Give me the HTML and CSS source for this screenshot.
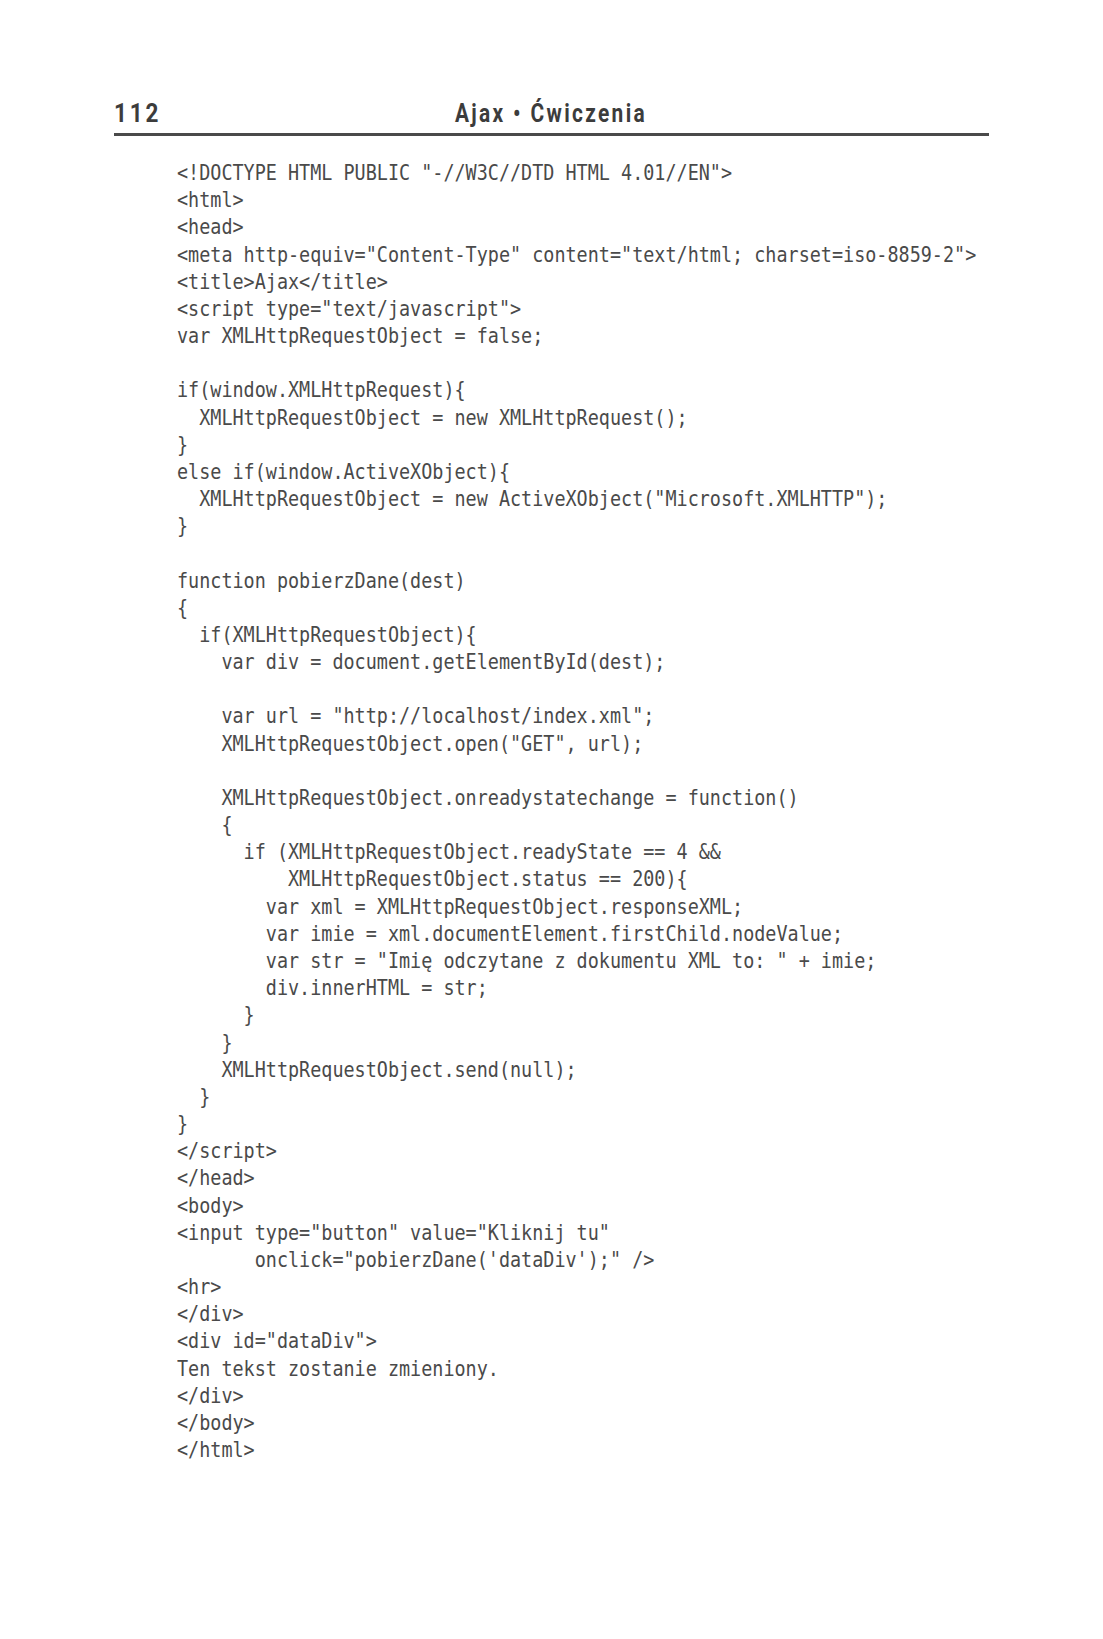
FILE: index.html
```html
<!DOCTYPE html>
<html lang="pl">
<head>
<meta charset="utf-8">
<title>Ajax • Ćwiczenia</title>
<link rel="stylesheet" href="styles.css">
</head>
<body>
<div class="page">
  <header class="running-head">
    <span class="folio">112</span>
    <span class="title">Ajax • Ćwiczenia</span>
    <span class="spacer"></span>
  </header>
  <div class="listing">
<pre class="code">&lt;!DOCTYPE HTML PUBLIC "-//W3C//DTD HTML 4.01//EN"&gt;
&lt;html&gt;
&lt;head&gt;
&lt;meta http-equiv="Content-Type" content="text/html; charset=iso-8859-2"&gt;
&lt;title&gt;Ajax&lt;/title&gt;
&lt;script type="text/javascript"&gt;
var XMLHttpRequestObject = false;

if(window.XMLHttpRequest){
  XMLHttpRequestObject = new XMLHttpRequest();
}
else if(window.ActiveXObject){
  XMLHttpRequestObject = new ActiveXObject("Microsoft.XMLHTTP");
}

function pobierzDane(dest)
{
  if(XMLHttpRequestObject){
    var div = document.getElementById(dest);

    var url = "http://localhost/index.xml";
    XMLHttpRequestObject.open("GET", url);

    XMLHttpRequestObject.onreadystatechange = function()
    {
      if (XMLHttpRequestObject.readyState == 4 &amp;&amp;
          XMLHttpRequestObject.status == 200){
        var xml = XMLHttpRequestObject.responseXML;
        var imie = xml.documentElement.firstChild.nodeValue;
        var str = "Imię odczytane z dokumentu XML to: " + imie;
        div.innerHTML = str;
      }
    }
    XMLHttpRequestObject.send(null);
  }
}
&lt;/script&gt;
&lt;/head&gt;
&lt;body&gt;
&lt;input type="button" value="Kliknij tu"
       onclick="pobierzDane('dataDiv');" /&gt;
&lt;hr&gt;
&lt;/div&gt;
&lt;div id="dataDiv"&gt;
Ten tekst zostanie zmieniony.
&lt;/div&gt;
&lt;/body&gt;
&lt;/html&gt;</pre>
  </div>
</div>
</body>
</html>
```

FILE: styles.css
```css
html, body {
  margin: 0;
  padding: 0;
  background: #ffffff;
}

.page {
  width: 875px;
  margin-left: 114px;
  padding-top: 99px;
}

.running-head {
  display: grid;
  grid-template-columns: 1fr auto 1fr;
  align-items: baseline;
  padding: 0 0 4px 0;
  border-bottom: 3px solid #4a4a4a;
  font-family: "Liberation Sans Narrow", "Roboto", "Liberation Sans", sans-serif;
  font-weight: bold;
  font-size: 25px;
  line-height: 30px;
  color: #3c3c3c;
}

.folio {
  justify-self: start;
  letter-spacing: 3.2px;
  transform: scaleX(0.9);
  transform-origin: left center;
}

.title {
  letter-spacing: 2.8px;
  transform: scaleX(0.835);
  transform-origin: center center;
}

.listing {
  padding-left: 63px;
  margin-top: 24px;
}

.code {
  margin: 0;
  font-family: "DejaVu Sans Mono", monospace;
  font-size: 21px;
  line-height: 27.17px;
  color: #4a4a4a;
  white-space: pre;
  transform: scaleX(0.878);
  transform-origin: left top;
}
```
